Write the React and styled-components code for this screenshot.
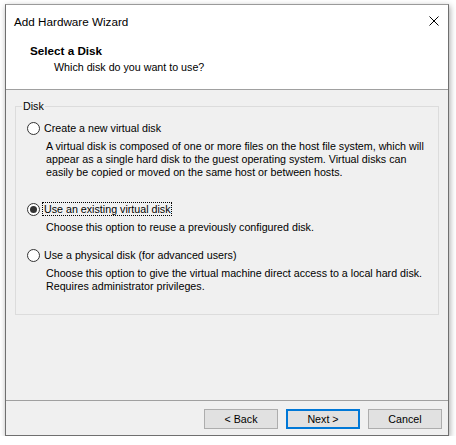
import React from 'react'
import styled, { createGlobalStyle, css } from 'styled-components'

const Global = createGlobalStyle`
  html, body {
    margin: 0;
    padding: 0;
    background: #ffffff;
  }
  body {
    font-family: "Liberation Sans", Arial, sans-serif;
    color: #000;
  }
`

const Page = styled.div`
  padding: 4px 0 0 5px;
`

const Window = styled.div`
  width: 444px;
  height: 432px;
  box-sizing: border-box;
  border: 1px solid #6f6f6f;
  border-top-color: #9a9a9a;
  background: #f0f0f0;
  box-shadow: 1px 2px 6px rgba(0, 0, 0, 0.35);
  display: flex;
  flex-direction: column;
`

const TitleBar = styled.div`
  height: 32px;
  background: #fff;
  display: flex;
  align-items: center;
  justify-content: space-between;
  padding: 0 9px 0 8px;
  font-size: 11.7px;
`

const Header = styled.div`
  background: #fff;
  padding: 6px 0 14px 24px;
  border-bottom: 1px solid #a0a0a0;
`

const HeaderTitle = styled.div`
  font-weight: bold;
  font-size: 11.7px;
  line-height: 16px;
`

const HeaderSub = styled.div`
  font-size: 10.7px;
  line-height: 16px;
  padding-left: 24px;
`

const Body = styled.div`
  flex: 1;
  padding: 0 9px;
`

const Group = styled.fieldset`
  margin: 8px 0 0 0;
  padding: 6px 8px 21px 6px;
  border: 1px solid #dcdcdc;
  font-size: 10.7px;
`

const Legend = styled.legend`
  padding: 0 1px;
  line-height: 16px;
`

const Options = styled.div`
  padding-left: 5px;
`

const Option = styled.div`
  margin-top: ${p => p.$gap}px;
`

const Row = styled.div`
  display: flex;
  align-items: center;
  height: 16px;
  gap: 4px;
`

const Radio = styled.span`
  width: 13px;
  height: 13px;
  box-sizing: border-box;
  border: 1px solid #333;
  border-radius: 50%;
  background: #fff;
  display: flex;
  align-items: center;
  justify-content: center;
  flex-shrink: 0;

  &::after {
    content: '';
    width: 7px;
    height: 7px;
    border-radius: 50%;
    background: ${p => (p.$checked ? '#333' : 'transparent')};
  }
`

const Label = styled.span`
  line-height: 12px;
  ${p =>
    p.$focused &&
    css`
      outline: 1px dotted #000;
      outline-offset: 0;
      margin-left: -1px;
      padding-left: 1px;
    `}
`

const Desc = styled.div`
  margin: 4px 0 0 19px;
  line-height: 13px;
`

const Footer = styled.div`
  border-top: 1px solid #a0a0a0;
  padding: 8px 6px 6px 0;
  display: flex;
  justify-content: flex-end;
  gap: 8px;
`

const Button = styled.button`
  width: 74px;
  height: 20px;
  box-sizing: border-box;
  margin: 0;
  padding: 0;
  background: #e1e1e1;
  border: ${p => (p.$default ? '2px solid #0078d7' : '1px solid #adadad')};
  font-family: "Liberation Sans", Arial, sans-serif;
  font-size: 10.7px;
  color: #000;
`

function CloseIcon() {
  return (
    <svg width="10" height="10" viewBox="0 0 10 10">
      <path d="M0.5 0.5 L9.5 9.5 M9.5 0.5 L0.5 9.5" stroke="#000" strokeWidth="1" fill="none" />
    </svg>
  )
}

const options = [
  {
    label: 'Create a new virtual disk',
    gap: 0,
    lines: [
      'A virtual disk is composed of one or more files on the host file system, which will',
      'appear as a single hard disk to the guest operating system. Virtual disks can',
      'easily be copied or moved on the same host or between hosts.',
    ],
  },
  {
    label: 'Use an existing virtual disk',
    gap: 22,
    checked: true,
    lines: ['Choose this option to reuse a previously configured disk.'],
  },
  {
    label: 'Use a physical disk (for advanced users)',
    gap: 13,
    lines: [
      'Choose this option to give the virtual machine direct access to a local hard disk.',
      'Requires administrator privileges.',
    ],
  },
]

export default function App() {
  return (
    <Page>
      <Global />
      <Window>
        <TitleBar>
          <span>Add Hardware Wizard</span>
          <CloseIcon />
        </TitleBar>
        <Header>
          <HeaderTitle>Select a Disk</HeaderTitle>
          <HeaderSub>Which disk do you want to use?</HeaderSub>
        </Header>
        <Body>
          <Group>
            <Legend>Disk</Legend>
            <Options>
              {options.map(o => (
                <Option key={o.label} $gap={o.gap}>
                  <Row>
                    <Radio $checked={o.checked} />
                    <Label $focused={o.checked}>{o.label}</Label>
                  </Row>
                  <Desc>
                    {o.lines.map(l => (
                      <div key={l}>{l}</div>
                    ))}
                  </Desc>
                </Option>
              ))}
            </Options>
          </Group>
        </Body>
        <Footer>
          <Button>&lt; Back</Button>
          <Button $default>Next &gt;</Button>
          <Button>Cancel</Button>
        </Footer>
      </Window>
    </Page>
  )
}
